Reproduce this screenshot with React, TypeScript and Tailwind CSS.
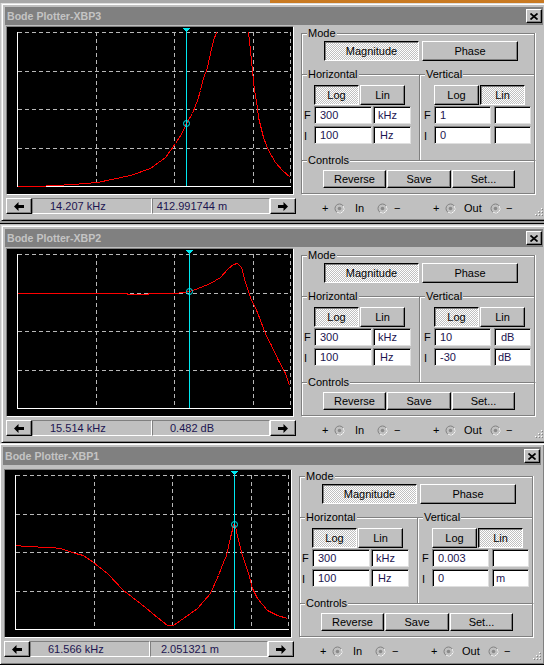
import React from "react";

type Pt = [number, number];

const RAISED =
  "bg-[#c0c0c0] border border-t-white border-l-white border-r-black border-b-black shadow-[inset_-1px_-1px_0_#808080]";
const PRESSED =
  "bg-[#e0e0e0] bg-[image:conic-gradient(#fff_25%,#c0c0c0_0_50%,#fff_0_75%,#c0c0c0_0)] bg-[length:2px_2px] border border-t-black border-l-black border-r-white border-b-white shadow-[inset_1px_1px_0_#808080]";
const SUNKEN =
  "border border-t-[#808080] border-l-[#808080] border-r-white border-b-white";

function Btn({ label, on, className }: { label: string; on?: boolean; className: string }) {
  return (
    <div
      className={`${on ? PRESSED : RAISED} flex items-center justify-center text-[11px] leading-none text-black ${className}`}
    >
      {label}
    </div>
  );
}

function Field({ v, className }: { v: string; className: string }) {
  return (
    <div
      className={`h-[18px] bg-white border border-t-[#808080] border-l-[#808080] border-r-[#dfdfdf] border-b-[#dfdfdf] shadow-[inset_1px_1px_0_#000] flex items-center text-[11px] leading-none text-[#1c1450] ${className}`}
    >
      {v}
    </div>
  );
}

function Label({ text }: { text: string }) {
  return (
    <span className="absolute left-[5px] top-[-7px] bg-[#c0c0c0] px-px text-[11px] leading-[13px] text-black">
      {text}
    </span>
  );
}

function Arrow({ right }: { right?: boolean }) {
  return (
    <svg width="10" height="9" viewBox="0 0 10 9" className={right ? "block rotate-180" : "block"}>
      <path d="M0 4.5 L4.5 0 V3 H10 V6 H4.5 V9 Z" fill="#000" />
    </svg>
  );
}

function Terminal() {
  return (
    <svg width="11" height="11" viewBox="0 0 11 11" className="block">
      <circle cx="5.5" cy="5.5" r="4.5" fill="#c0c0c0" stroke="#808080" />
      <path d="M9.4 3.2 A4.5 4.5 0 0 1 3.2 9.4" fill="none" stroke="#fff" />
      <circle cx="5.5" cy="5.5" r="1.8" fill="#8a8a8a" />
    </svg>
  );
}

function Plot({ id, curve, cx, cy }: { id: string; curve: Pt[]; cx: number; cy: number }) {
  const vx = [89, 167, 246, 283];
  const hy = [5, 44, 82, 121];
  const x = cx + 0.5;
  return (
    <div className={`ml-px mt-px w-[288px] h-[169px] bg-black ${SUNKEN}`}>
      <svg width="286" height="167" viewBox="0 0 286 167" className="block" shapeRendering="crispEdges">
        <defs>
          <clipPath id={id}>
            <rect x="10" y="5" width="275" height="155" />
          </clipPath>
        </defs>
        {vx.map((v) => (
          <line key={v} x1={v + 0.5} y1={5} x2={v + 0.5} y2={159} stroke="#b8b8b8" strokeDasharray="4 3" />
        ))}
        {hy.map((h) => (
          <line key={h} x1={11} y1={h + 0.5} x2={284} y2={h + 0.5} stroke="#b8b8b8" strokeDasharray="4 3" />
        ))}
        <line x1={10.5} y1={5} x2={10.5} y2={160} stroke="#fff" />
        <line x1={10} y1={159.5} x2={284} y2={159.5} stroke="#fff" />
        <polyline
          points={curve.map(([a, b]) => `${a + 0.5},${b + 0.5}`).join(" ")}
          fill="none"
          stroke="#ff0000"
          strokeWidth="1"
          clipPath={`url(#${id})`}
        />
        <line x1={x} y1={4} x2={x} y2={159} stroke="#00e8f0" />
        <path d={`M${x - 4} 0.5 H${x + 4} L${x} 5 Z`} fill="#00e8f0" />
        <circle cx={x} cy={cy + 0.5} r="3" fill="none" stroke="#00e8f0" shapeRendering="auto" />
      </svg>
    </div>
  );
}

type WinProps = {
  id: string;
  title: string;
  vLin: boolean;
  vals: [string, string, string, string, string, string, string, string];
  s1: string;
  s2: string;
  curve: Pt[];
  cx: number;
  cy: number;
  className: string;
  bodyClass: string;
};

function BodeWindow(p: WinProps) {
  const [hF, hFu, hI, hIu, vF, vFu, vI, vIu] = p.vals;
  return (
    <div
      className={`relative shrink-0 w-[546px] bg-[#c0c0c0] border border-t-[#dfdfdf] border-l-[#dfdfdf] border-r-black border-b-black shadow-[inset_1px_1px_0_#fff,inset_-1px_-1px_0_#808080] p-[3px] ${p.className}`}
    >
      <div className="h-[18px] bg-[#808080] flex items-center justify-between pl-[2px] pr-px">
        <span className="text-[#c4c4c4] font-bold text-[10.6px] leading-none">{p.title}</span>
        <div className={`${RAISED} w-[16px] h-[14px] flex items-center justify-center`}>
          <svg width="8" height="7" viewBox="0 0 8 7" className="block">
            <path d="M0.5 0.5 L7.5 6.5 M7.5 0.5 L0.5 6.5" stroke="#000" strokeWidth="1.7" />
          </svg>
        </div>
      </div>

      <div className={`flex ${p.bodyClass}`}>
        <div className="w-[292px] flex flex-col">
          <Plot id={p.id} curve={p.curve} cx={p.cx} cy={p.cy} />
          <div className="ml-px mt-[3px] w-[290px] h-[16px] flex text-[11px] leading-none text-[#1c1450]">
            <div className={`${RAISED} w-[26px] flex items-center justify-center`}>
              <Arrow />
            </div>
            <div className={`${SUNKEN} w-[120px] flex items-center pl-[17px]`}>{p.s1}</div>
            <div className={`${SUNKEN} w-[118px] flex items-center`}>
              <span className="block w-[78px] text-center">{p.s2}</span>
            </div>
            <div className={`${RAISED} w-[26px] flex items-center justify-center`}>
              <Arrow right />
            </div>
          </div>
        </div>

        <div className="w-[246px] flex flex-col">
          <div className="ml-[4px] mt-[8px] w-[234px] flex flex-col">
            <div className="relative h-[41px] border border-b-0 border-[#808080] shadow-[inset_1px_1px_0_#fff,1px_0_0_#fff]">
              <Label text="Mode" />
              <div className="flex gap-[3px] pl-[22px] pt-[7px]">
                <Btn label="Magnitude" on className="w-[95px] h-[20px]" />
                <Btn label="Phase" className="w-[96px] h-[20px]" />
              </div>
            </div>

            <div className="h-[86px] flex border border-b-0 border-[#808080] shadow-[inset_1px_1px_0_#fff,1px_0_0_#fff]">
              <div className="relative w-[117px] pt-[10px]">
                <Label text="Horizontal" />
                <div className="flex gap-px ml-[12px]">
                  <Btn label="Log" on className="w-[45px] h-[20px]" />
                  <Btn label="Lin" className="w-[45px] h-[20px]" />
                </div>
                <div className="flex items-center mt-px">
                  <span className="w-[12px] pl-[2px] text-[11px] leading-none">F</span>
                  <Field v={hF} className="w-[58px] pl-[5px]" />
                  <Field v={hFu} className="w-[38px] ml-px pl-[4px]" />
                </div>
                <div className="flex items-center mt-[2px]">
                  <span className="w-[12px] pl-[2px] pt-[3px] text-[11px] leading-none">I</span>
                  <Field v={hI} className="w-[58px] pl-[5px]" />
                  <Field v={hIu} className="w-[38px] ml-px pl-[6px]" />
                </div>
              </div>
              <div className="relative flex-1 pt-[10px] border-l border-[#808080] shadow-[inset_1px_0_0_#fff]">
                <Label text="Vertical" />
                <div className="flex gap-px ml-[14px]">
                  <Btn label="Log" on={!p.vLin} className="w-[45px] h-[20px]" />
                  <Btn label="Lin" on={p.vLin} className="w-[45px] h-[20px]" />
                </div>
                <div className="flex items-center mt-px">
                  <span className="w-[14px] pl-[4px] text-[11px] leading-none">F</span>
                  <Field v={vF} className="w-[57px] pl-[5px]" />
                  <Field v={vFu} className="w-[37px] ml-[3px] pl-[6px]" />
                </div>
                <div className="flex items-center mt-[2px]">
                  <span className="w-[14px] pl-[4px] pt-[3px] text-[11px] leading-none">I</span>
                  <Field v={vI} className="w-[57px] pl-[5px]" />
                  <Field v={vIu} className="w-[37px] ml-[3px] pl-[3px]" />
                </div>
              </div>
            </div>

            <div className="relative h-[34px] border border-[#808080] shadow-[inset_1px_1px_0_#fff,1px_1px_0_#fff]">
              <Label text="Controls" />
              <div className="flex gap-px pl-[21px] pt-[9px]">
                <Btn label="Reverse" className="w-[63px] h-[18px]" />
                <Btn label="Save" className="w-[64px] h-[18px]" />
                <Btn label="Set..." className="w-[63px] h-[18px]" />
              </div>
            </div>
          </div>

          <div className="mt-[6px] h-[16px] flex items-center pl-[25px] text-[11px] leading-none text-black">
            <span className="w-[12px]">+</span>
            <span className="w-[21px]">
              <Terminal />
            </span>
            <span className="w-[22px]">In</span>
            <span className="w-[17px]">
              <Terminal />
            </span>
            <span className="w-[39px]">−</span>
            <span className="w-[12px]">+</span>
            <span className="w-[19px]">
              <Terminal />
            </span>
            <span className="w-[26px]">Out</span>
            <span className="w-[16px]">
              <Terminal />
            </span>
            <span className="w-[10px]">−</span>
          </div>
        </div>
      </div>

      <svg width="10" height="10" viewBox="0 0 10 10" className="absolute right-[3px] bottom-[4px]">
        {[
          [8, 2],
          [5, 5],
          [8, 5],
          [2, 8],
          [5, 8],
          [8, 8],
        ].map(([a, b]) => (
          <g key={`${a}-${b}`}>
            <rect x={a} y={b} width="1" height="1" fill="#fff" />
            <rect x={a + 1} y={b + 1} width="1" height="1" fill="#808080" />
          </g>
        ))}
      </svg>
    </div>
  );
}

const C1: Pt[] = [
  [10, 159], [30, 159], [66, 157], [90, 155], [123, 148], [143, 141], [158, 130], [168, 116],
  [175, 105], [179, 96], [185, 86], [190, 73], [193, 63], [196, 51], [200, 40], [203, 26],
  [206, 13], [209, 5], [210, 0],
  [240, 0], [241, 5], [243, 23], [245, 44], [247, 63], [250, 80], [251, 90], [256, 110],
  [261, 123], [268, 135], [275, 143], [283, 150],
];

const C2: Pt[] = [
  [10, 44], [120, 44], [120, 45], [141, 45], [141, 44], [167, 44], [176, 43], [182, 42],
  [188, 40], [203, 34], [213, 28], [221, 19], [226, 15], [230, 14], [234, 18], [238, 33],
  [243, 48], [250, 63], [256, 79], [260, 89], [263, 94], [271, 111], [278, 124], [282, 136],
];

const C3: Pt[] = [
  [11, 75], [20, 76], [45, 77], [55, 78], [70, 83], [78, 85], [88, 92], [102, 103], [118, 120],
  [135, 133], [152, 147], [162, 155], [168, 155], [178, 148], [192, 138], [205, 123], [213, 105],
  [218, 92], [221, 85], [225, 67], [228, 55], [229, 52], [233, 70], [237, 85], [243, 103],
  [247, 118], [252, 128], [262, 140], [272, 145], [282, 148],
];

export default function App() {
  return (
    <div className="w-[544px] h-[665px] overflow-hidden bg-[#c0c0c0] font-['Liberation_Sans',Arial,sans-serif]">
      <div className="h-[3px] bg-[linear-gradient(90deg,#a8a8a8_0_270px,#c97a22_270px)]" />
      <BodeWindow
        id="p3"
        title="Bode Plotter-XBP3"
        vLin
        vals={["300", "kHz", "100", "Hz", "1", "", "0", ""]}
        s1="14.207 kHz"
        s2="412.991744 m"
        curve={C1}
        cx={179}
        cy={96}
        className="ml-px h-[218px]"
        bodyClass=""
      />
      <div className="h-[2px] bg-[#9a9a9a]" />
      <div className="h-px bg-black" />
      <div className="h-px bg-[#c0c0c0]" />
      <BodeWindow
        id="p2"
        title="Bode Plotter-XBP2"
        vLin={false}
        vals={["300", "kHz", "100", "Hz", "10", "dB", "-30", "dB"]}
        s1="15.514 kHz"
        s2="0.482 dB"
        curve={C2}
        cx={182}
        cy={42}
        className="ml-px h-[218px]"
        bodyClass=""
      />
      <BodeWindow
        id="p1"
        title="Bode Plotter-XBP1"
        vLin
        vals={["300", "kHz", "100", "Hz", "0.003", "", "0", "m"]}
        s1="61.566 kHz"
        s2="2.051321 m"
        curve={C3}
        cx={229}
        cy={54}
        className="-ml-px h-[222px]"
        bodyClass="mt-[3px]"
      />
    </div>
  );
}
